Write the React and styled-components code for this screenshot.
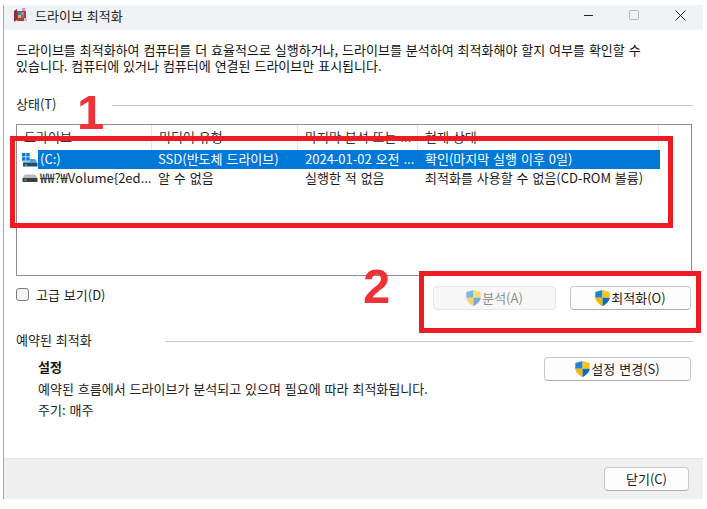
import React from 'react';
import styled, { createGlobalStyle } from 'styled-components';

const GlobalStyle = createGlobalStyle`
  html, body {
    margin: 0;
    padding: 0;
    background: #fff;
  }
  body {
    font-family: "Noto Sans CJK KR", "Noto Sans", sans-serif;
    font-size: 13px;
    word-spacing: 1px;
    color: #1a1a1a;
  }
`;

const Page = styled.div`
  position: relative;
  width: 707px;
  height: 509px;
  padding: 5px 4px 10px 3px;
  box-sizing: border-box;
  overflow: hidden;
  background: #fff;
`;

const Window = styled.div`
  height: 100%;
  display: flex;
  flex-direction: column;
  border-left: 1px solid #b8a878;
`;

const TitleBar = styled.div`
  height: 25px;
  flex-shrink: 0;
  box-sizing: border-box;
  display: flex;
  align-items: center;
  padding: 0 0 5px 9px;
  background: #f0f3f5;
`;

const TitleText = styled.span`
  margin-left: 7px;
  color: #222;
`;

const WindowControls = styled.div`
  margin-left: auto;
  display: flex;
  align-items: center;
  gap: 36px;
  padding-right: 17px;
`;

const Body = styled.div`
  flex: 1;
  min-height: 0;
  display: flex;
  flex-direction: column;
  padding: 12px 10px 0 12px;
`;

const Intro = styled.p`
  margin: 0;
  line-height: 16px;
  color: #111;
  white-space: nowrap;
`;

const GroupHeader = styled.div`
  display: flex;
  align-items: center;
  height: 18px;
  margin-top: ${props => props.$top}px;
  color: #222;
`;

const GroupLabel = styled.span`
  width: ${props => props.$width}px;
  flex-shrink: 0;
  padding-bottom: 3px;
  white-space: nowrap;
`;

const GroupLine = styled.div`
  flex: 1;
  height: 1px;
  background: #c8c8c8;
`;

const ListBox = styled.div`
  height: 152px;
  margin: 10px 1px 0 0;
  box-sizing: border-box;
  border: 1px solid #8b8f94;
`;

const HeaderRow = styled.div`
  display: grid;
  grid-template-columns: 135px 146px 120px 241px;
  height: 25px;
`;

const HeaderCell = styled.div`
  padding-left: 7px;
  line-height: 24px;
  color: #333;
  border-right: 1px solid #e3e5e7;
  white-space: nowrap;
  overflow: hidden;
`;

const Row = styled.div`
  display: flex;
  height: 19px;
  align-items: center;
`;

const DriveSlot = styled.div`
  width: 21px;
  flex-shrink: 0;
  display: flex;
  padding-left: 5px;
  box-sizing: border-box;
`;

const RowCells = styled.div`
  display: grid;
  grid-template-columns: 114px 146px 120px 242px;
  height: 19px;
  align-items: start;
  color: ${props => (props.$selected ? '#fff' : '#1a1a1a')};
  background: ${props => (props.$selected ? '#0078d7' : 'transparent')};
`;

const Cell = styled.span`
  padding-left: ${props => props.$pad}px;
  line-height: 18px;
  white-space: nowrap;
  overflow: hidden;
`;

const ActionRow = styled.div`
  display: flex;
  align-items: flex-start;
  margin-top: 10px;
  height: 26px;
`;

const CheckLabel = styled.label`
  display: flex;
  align-items: center;
  gap: 7px;
  height: 16px;
  margin-top: 0;
  color: #222;
`;

const CheckBox = styled.span`
  width: 13px;
  height: 13px;
  margin-top: 1px;
  box-sizing: border-box;
  border: 1px solid #7d7d7d;
  border-radius: 3px;
  background: #f4f4f4;
`;

const ActionButtons = styled.div`
  margin-left: auto;
  display: flex;
  gap: 14px;
  padding-right: 2px;
`;

const Button = styled.button`
  display: flex;
  align-items: center;
  justify-content: center;
  gap: 1px;
  width: ${props => props.$width}px;
  height: 24px;
  padding: 0 0 1px;
  box-sizing: border-box;
  border: 1px solid ${props => (props.disabled ? '#e6e6e6' : '#c9c9c9')};
  border-bottom-color: ${props => (props.disabled ? '#e6e6e6' : '#adadad')};
  border-radius: 4px;
  background: ${props => (props.disabled ? '#f7f7f7' : '#fdfdfd')};
  color: ${props => (props.disabled ? '#8e8e8e' : '#1a1a1a')};
  font-family: inherit;
  font-size: 13px;
  word-spacing: 1px;
`;

const Schedule = styled.div`
  display: flex;
  padding: 7px 2px 0 22px;
`;

const ScheduleText = styled.div`
  flex: 1;
  display: flex;
  flex-direction: column;
`;

const ScheduleTitle = styled.div`
  height: 22px;
  line-height: 20px;
  font-weight: 700;
  color: #111;
`;

const ScheduleLine = styled.div`
  height: 21px;
  line-height: 19px;
  color: #222;
  white-space: nowrap;
`;

const Footer = styled.div`
  height: 41px;
  flex-shrink: 0;
  display: flex;
  align-items: center;
  justify-content: flex-end;
  padding: 0 14px 0 0;
  box-sizing: border-box;
  border-top: 1px solid #e6e6e6;
  background: #f0f0f0;
`;

const Highlight = styled.div`
  position: absolute;
  left: ${props => props.$x}px;
  top: ${props => props.$y}px;
  width: ${props => props.$w}px;
  height: ${props => props.$h}px;
  box-sizing: border-box;
  border: 5px solid #ed1c24;
  pointer-events: none;
`;

const Marker = styled.div`
  position: absolute;
  left: ${props => props.$x}px;
  top: ${props => props.$y}px;
  font-family: "Liberation Sans", sans-serif;
  font-size: 49px;
  line-height: 49px;
  font-weight: 700;
  color: #ee3238;
`;

const Shield = ({ faded }) => (
  <svg width="15" height="16" viewBox="1 1 14 15.5" style={{ opacity: faded ? 0.55 : 1 }}>
    <path d="M8 1 L1 3 V8.5 H8Z" fill="#1a86d0" />
    <path d="M8 1 L15 3 V8.5 H8Z" fill="#fcc419" />
    <path d="M1 8.5 C1.5 12.5 5 15 8 16.5 V8.5Z" fill="#f5b800" />
    <path d="M15 8.5 C14.5 12.5 11 15 8 16.5 V8.5Z" fill="#0f6cbd" />
  </svg>
);

const AppIcon = () => (
  <svg width="15" height="15" viewBox="0 0 15 15">
    <path d="M1 3 L4 1 V12 L1 14Z" fill="#8c2f39" />
    <rect x="4" y="3" width="9" height="10" fill="#b03a48" />
    <rect x="5" y="4" width="3" height="3" fill="#3f7fd0" />
    <rect x="8" y="4" width="3" height="3" fill="#62b84c" />
    <rect x="5" y="7" width="3" height="3" fill="#e3b23c" />
    <rect x="8" y="7" width="3" height="3" fill="#8e5bc4" />
    <rect x="9" y="0" width="3" height="3" fill="#d48be0" />
    <rect x="11" y="10" width="3" height="3" fill="#c9c9d6" />
  </svg>
);

const SystemDrive = () => (
  <svg width="16" height="14" viewBox="0 0 16 14">
    <rect x="0" y="0" width="3.5" height="3.5" fill="#0a78d4" />
    <rect x="4.2" y="0" width="3.5" height="3.5" fill="#0a78d4" />
    <rect x="0" y="4.2" width="3.5" height="3.5" fill="#0a78d4" />
    <rect x="4.2" y="4.2" width="3.5" height="3.5" fill="#0a78d4" />
    <path d="M8 6 H13 L15.5 10 H1 V8.5 H8Z" fill="#5a9ec9" />
    <rect x="1" y="10" width="14.5" height="3.5" rx="0.5" fill="#1f4f6e" />
    <rect x="3" y="11.5" width="2" height="1" fill="#6fe08a" />
  </svg>
);

const PlainDrive = () => (
  <svg width="16" height="9" viewBox="0 0 16 9">
    <path d="M3 0.5 H13 L15.5 4 H0.5Z" fill="#b9b9b9" />
    <rect x="0.5" y="4" width="15" height="4" rx="0.5" fill="#3d3d3d" />
    <rect x="2.5" y="5.5" width="2" height="1" fill="#7fd88f" />
  </svg>
);

const columns = ['드라이브', '미디어 유형', '마지막 분석 또는 ...', '현재 상태'];

const drives = [
  { icon: <SystemDrive />, name: '(C:)', media: 'SSD(반도체 드라이브)', last: '2024-01-02 오전 ...', status: '확인(마지막 실행 이후 0일)', selected: true },
  { icon: <PlainDrive />, name: '₩₩?₩Volume{2ed...', media: '알 수 없음', last: '실행한 적 없음', status: '최적화를 사용할 수 없음(CD-ROM 볼륨)', selected: false },
];

export default function App() {
  return (
    <Page>
      <GlobalStyle />
      <Window>
        <TitleBar>
          <AppIcon />
          <TitleText>드라이브 최적화</TitleText>
          <WindowControls>
            <svg width="12" height="10" viewBox="0 0 12 10"><path d="M3 5.5H12" stroke="#222" /></svg>
            <svg width="10" height="10" viewBox="0 0 10 10"><rect x="0.5" y="0.5" width="9" height="9" rx="1" fill="none" stroke="#b4b4b4" /></svg>
            <svg width="11" height="11" viewBox="0 0 11 11"><path d="M0.5 0.5L10.5 10.5M10.5 0.5L0.5 10.5" stroke="#222" /></svg>
          </WindowControls>
        </TitleBar>

        <Body>
          <Intro>
            드라이브를 최적화하여 컴퓨터를 더 효율적으로 실행하거나, 드라이브를 분석하여 최적화해야 할지 여부를 확인할 수
            <br />
            있습니다. 컴퓨터에 있거나 컴퓨터에 연결된 드라이브만 표시됩니다.
          </Intro>

          <GroupHeader $top={22}>
            <GroupLabel $width={96}>상태(T)</GroupLabel>
            <GroupLine />
          </GroupHeader>

          <ListBox>
            <HeaderRow>
              {columns.map(name => <HeaderCell key={name}>{name}</HeaderCell>)}
            </HeaderRow>
            {drives.map(drive => (
              <Row key={drive.name}>
                <DriveSlot>{drive.icon}</DriveSlot>
                <RowCells $selected={drive.selected}>
                  <Cell $pad={2}>{drive.name}</Cell>
                  <Cell $pad={6}>{drive.media}</Cell>
                  <Cell $pad={7}>{drive.last}</Cell>
                  <Cell $pad={7}>{drive.status}</Cell>
                </RowCells>
              </Row>
            ))}
          </ListBox>

          <ActionRow>
            <CheckLabel>
              <CheckBox />
              고급 보기(D)
            </CheckLabel>
            <ActionButtons>
              <Button $width={123} disabled><Shield faded />분석(A)</Button>
              <Button $width={121}><Shield />최적화(O)</Button>
            </ActionButtons>
          </ActionRow>

          <GroupHeader $top={20}>
            <GroupLabel $width={149}>예약된 최적화</GroupLabel>
            <GroupLine />
          </GroupHeader>

          <Schedule>
            <ScheduleText>
              <ScheduleTitle>설정</ScheduleTitle>
              <ScheduleLine>예약된 흐름에서 드라이브가 분석되고 있으며 필요에 따라 최적화됩니다.</ScheduleLine>
              <ScheduleLine>주기: 매주</ScheduleLine>
            </ScheduleText>
            <Button $width={147}><Shield />설정 변경(S)</Button>
          </Schedule>
        </Body>

        <Footer>
          <Button $width={85}>닫기(C)</Button>
        </Footer>
      </Window>

      <Highlight $x={10} $y={136} $w={663} $h={92} />
      <Highlight $x={419} $y={271} $w={282} $h={62} />
      <Marker $x={77} $y={88}>1</Marker>
      <Marker $x={363} $y={262}>2</Marker>
    </Page>
  );
}
